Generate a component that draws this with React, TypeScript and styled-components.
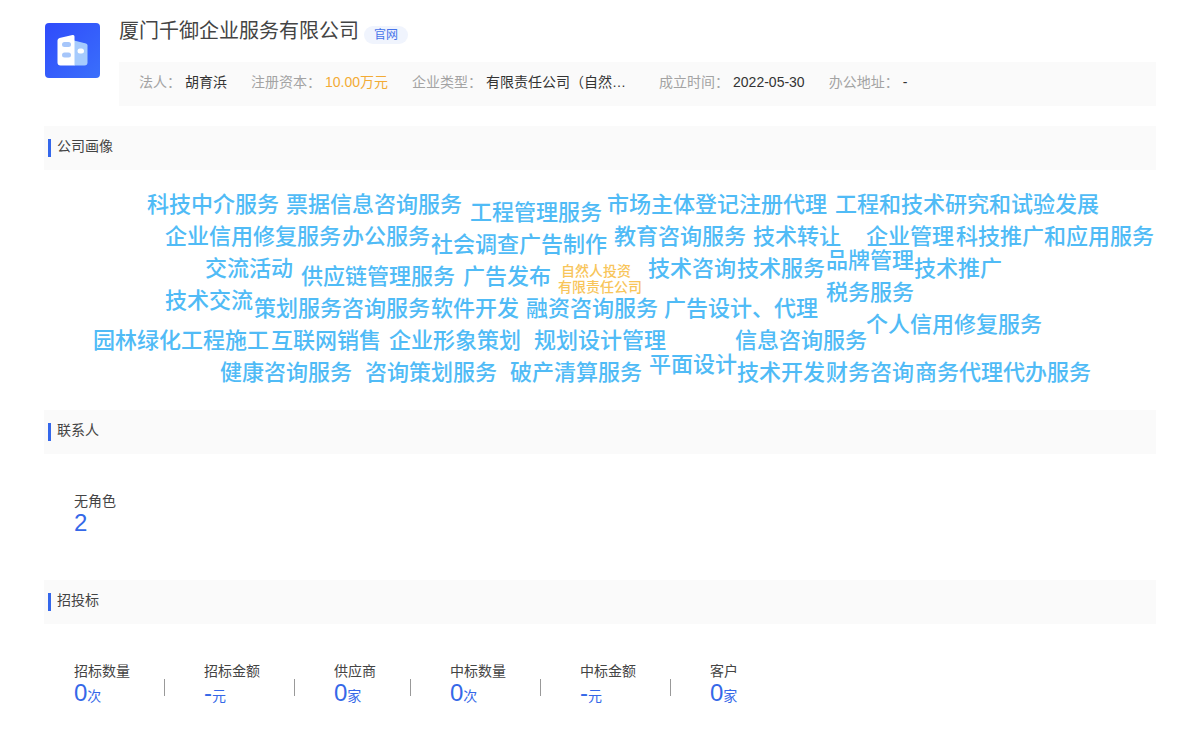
import React from 'react';
import styled, { createGlobalStyle } from 'styled-components';

const GlobalStyle = createGlobalStyle`
  * { box-sizing: border-box; }
  body {
    margin: 0;
    background: #fff;
    color: #444;
    font-family: "Liberation Sans", "Noto Sans CJK SC", sans-serif;
    font-size: 14px;
    line-height: 22px;
  }
  h1, h2, dl, dt, dd { margin: 0; font-weight: 400; }
`;

const Page = styled.main`
  padding: 20px 44px 36px;
`;

const CompanyHeader = styled.header`
  display: flex;
  gap: 18px;
  margin-bottom: 20px;
`;

const Logo = styled.svg`
  flex: none;
  width: 57px;
  height: 57px;
  margin-top: 2px;
`;

const CompanyBody = styled.div`
  flex: 1;
  min-width: 0;
`;

const TitleRow = styled.div`
  display: flex;
  align-items: flex-start;
  gap: 5px;
  height: 42px;
`;

const CompanyName = styled.h1`
  font-size: 20px;
  line-height: 22px;
`;

const SiteLink = styled.a`
  margin-top: 6px;
  padding: 0 10px;
  border-radius: 9px;
  background: #f0f4fd;
  color: #4673ea;
  font-size: 12px;
  line-height: 18px;
  text-decoration: none;
`;

const InfoBar = styled.dl`
  display: flex;
  flex-wrap: wrap;
  column-gap: 24px;
  padding: 9px 20px 13px;
  background: #fafafa;
`;

const InfoItem = styled.div`
  display: flex;
  gap: 4px;
`;

const InfoLabel = styled.dt`
  color: #a3a3a3;
`;

const InfoValue = styled.dd<{ $accent?: boolean; $wide?: boolean }>`
  min-width: ${(p) => (p.$wide ? '149px' : '0')};
  color: ${(p) => (p.$accent ? '#f3ab35' : '#333')};
  white-space: nowrap;
`;

const SectionTitle = styled.h2`
  display: flex;
  align-items: flex-start;
  gap: 6px;
  height: 44px;
  padding: 9px 4px;
  background: #fafafa;
  font-size: 14px;

  &::before {
    content: "";
    width: 3px;
    height: 18px;
    margin-top: 4px;
    background: #3467eb;
  }
`;

const Cloud = styled.div`
  position: relative;
  height: 240px;
  overflow: hidden;
`;

const Word = styled.span<{ $x: number; $y: number; $small?: boolean }>`
  position: absolute;
  left: calc(50% + ${(p) => p.$x}px);
  top: ${(p) => p.$y}px;
  color: ${(p) => (p.$small ? '#f8c55a' : '#50bbf6')};
  font-size: ${(p) => (p.$small ? 14 : 22)}px;
  font-weight: 500;
  line-height: ${(p) => (p.$small ? 16 : 34)}px;
  white-space: nowrap;
`;

const StatList = styled.dl<{ $tall?: boolean }>`
  display: flex;
  flex-wrap: wrap;
  padding: 36px 30px ${(p) => (p.$tall ? 46 : 0)}px;
`;

const Stat = styled.div`
  display: flex;

  & + &::before {
    content: "";
    width: 1px;
    height: 17px;
    margin: 19px 39px 0 34px;
    background: #999;
  }
`;

const StatValue = styled.dd`
  color: #3568e8;
  font-size: 24px;
`;

const Unit = styled.span`
  font-size: 14px;
`;

type CloudWord = [text: string, x: number, y: number, small?: boolean];

// Offsets are measured from the horizontal centre of the cloud.
const words: CloudWord[] = [
  ['科技中介服务', -453, 18],
  ['票据信息咨询服务', -314, 18],
  ['工程管理服务', -130, 26],
  ['市场主体登记注册代理', 7, 18],
  ['工程和技术研究和试验发展', 235, 18],
  ['企业信用修复服务', -435, 50],
  ['办公服务', -258, 50],
  ['社会调查', -169, 58],
  ['广告制作', -81, 58],
  ['教育咨询服务', 14, 50],
  ['技术转让', 153, 50],
  ['企业管理', 266, 50],
  ['科技推广和应用服务', 356, 50],
  ['交流活动', -395, 82],
  ['供应链管理服务', -299, 90],
  ['广告发布', -137, 90],
  ['自然人投资', -39, 93, true],
  ['有限责任公司', -42, 109, true],
  ['技术咨询', 48, 82],
  ['技术服务', 137, 82],
  ['品牌管理', 226, 74],
  ['技术推广', 314, 82],
  ['税务服务', 226, 106],
  ['技术交流', -435, 114],
  ['策划服务', -346, 122],
  ['咨询服务', -258, 122],
  ['软件开发', -169, 122],
  ['融资咨询服务', -74, 122],
  ['广告设计、代理', 64, 122],
  ['个人信用修复服务', 266, 138],
  ['园林绿化工程施工', -507, 154],
  ['互联网销售', -329, 154],
  ['企业形象策划', -211, 154],
  ['规划设计管理', -66, 154],
  ['信息咨询服务', 135, 154],
  ['健康咨询服务', -380, 186],
  ['咨询策划服务', -235, 186],
  ['破产清算服务', -90, 186],
  ['平面设计', 49, 178],
  ['技术开发', 137, 186],
  ['财务咨询', 226, 186],
  ['商务代理代办服务', 315, 186],
];

const bids = [
  { label: '招标数量', value: '0', unit: '次' },
  { label: '招标金额', value: '-', unit: '元' },
  { label: '供应商', value: '0', unit: '家' },
  { label: '中标数量', value: '0', unit: '次' },
  { label: '中标金额', value: '-', unit: '元' },
  { label: '客户', value: '0', unit: '家' },
];

function CompanyLogo() {
  return (
    <Logo viewBox="0 0 57 57" aria-hidden="true">
      <defs>
        <linearGradient id="logo-bg" x1="0" y1="0" x2="1" y2="1">
          <stop offset="0" stopColor="#2f4bfb" />
          <stop offset="1" stopColor="#3a6ffb" />
        </linearGradient>
      </defs>
      <rect x="1" y="1" width="55" height="55" rx="4" fill="url(#logo-bg)" />
      <path d="M30 18.500 L42 21.500 Q43.500 22 43.500 23.500 V40.500 Q43.500 43.500 40.500 43.500 H30 Z" fill="#a6cbfd" />
      <path d="M13.500 18.500 Q13.500 16.500 15.500 16 L28.500 13 Q30.500 12.500 30.500 14.500 V43.500 H16.500 Q13.500 43.500 13.500 40.500 Z" fill="#fff" />
      <rect x="18" y="20" width="9" height="5" rx="2.500" fill="#a6c6fa" />
      <rect x="18" y="30.500" width="9" height="5" rx="2.500" fill="#a6c6fa" />
      <rect x="33.500" y="26.500" width="6.500" height="5" rx="2.500" fill="#fff" />
    </Logo>
  );
}

export default function App() {
  return (
    <>
      <GlobalStyle />
      <Page lang="zh-CN">
        <CompanyHeader>
          <CompanyLogo />
          <CompanyBody>
            <TitleRow>
              <CompanyName>厦门千御企业服务有限公司</CompanyName>
              <SiteLink href="#">官网</SiteLink>
            </TitleRow>
            <InfoBar>
              <InfoItem>
                <InfoLabel>法人：</InfoLabel>
                <InfoValue>胡育浜</InfoValue>
              </InfoItem>
              <InfoItem>
                <InfoLabel>注册资本：</InfoLabel>
                <InfoValue $accent>10.00万元</InfoValue>
              </InfoItem>
              <InfoItem>
                <InfoLabel>企业类型：</InfoLabel>
                <InfoValue $wide>有限责任公司（自然…</InfoValue>
              </InfoItem>
              <InfoItem>
                <InfoLabel>成立时间：</InfoLabel>
                <InfoValue>2022-05-30</InfoValue>
              </InfoItem>
              <InfoItem>
                <InfoLabel>办公地址：</InfoLabel>
                <InfoValue>-</InfoValue>
              </InfoItem>
            </InfoBar>
          </CompanyBody>
        </CompanyHeader>

        <section>
          <SectionTitle>公司画像</SectionTitle>
          <Cloud>
            {words.map(([text, x, y, small]) => (
              <Word key={text} $x={x} $y={y} $small={small}>
                {text}
              </Word>
            ))}
          </Cloud>
        </section>

        <section>
          <SectionTitle>联系人</SectionTitle>
          <StatList $tall>
            <Stat>
              <div>
                <dt>无角色</dt>
                <StatValue>2</StatValue>
              </div>
            </Stat>
          </StatList>
        </section>

        <section>
          <SectionTitle>招投标</SectionTitle>
          <StatList>
            {bids.map((bid) => (
              <Stat key={bid.label}>
                <div>
                  <dt>{bid.label}</dt>
                  <StatValue>
                    {bid.value}
                    <Unit>{bid.unit}</Unit>
                  </StatValue>
                </div>
              </Stat>
            ))}
          </StatList>
        </section>
      </Page>
    </>
  );
}
